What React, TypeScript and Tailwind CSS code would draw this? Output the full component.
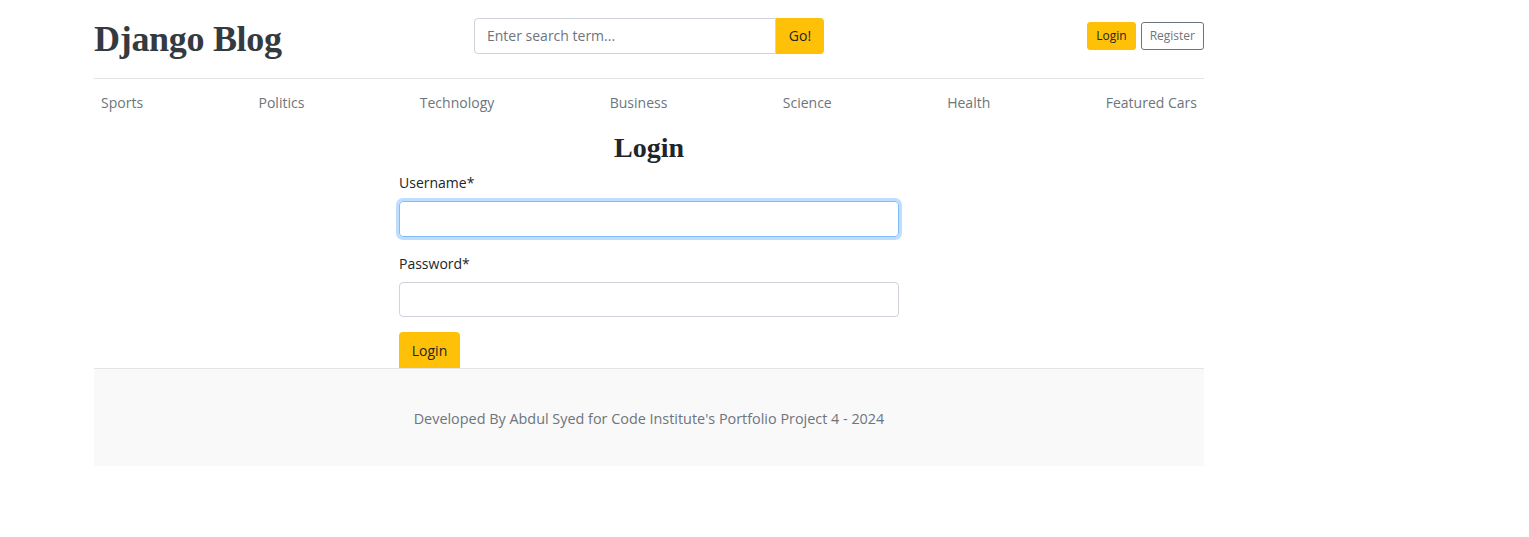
export default function App() {
  const cats = ["Sports", "Politics", "Technology", "Business", "Science", "Health", "Featured Cars"];
  return (
    <div className="min-h-[537px] bg-white" style={{ fontFamily: '"Open Sans", "Noto Sans", sans-serif' }}>
      <div className="ml-[94px] w-[1110px]">
        <header className="flex items-center h-[79px] border-b border-[#e5e5e5]">
          <div className="w-[380px]">
            <span className="text-[36px] font-bold text-[#343a40] leading-none tracking-[-0.3px]" style={{ fontFamily: '"Liberation Serif", "DejaVu Serif", serif' }}>
              Django Blog
            </span>
          </div>
          <div className="flex items-center h-[36px] mb-[7px]">
            <input
              placeholder="Enter search term..."
              className="w-[302px] h-[36px] border border-[#ced4da] rounded-l-[4px] px-3 text-[14px] text-[#495057] placeholder:text-[#6c757d] outline-none"
            />
            <button className="h-[36px] w-[48px] bg-[#ffc107] rounded-r-[4px] text-[14px] text-[#212529]">Go!</button>
          </div>
          <div className="ml-auto flex items-center gap-[5px] mb-[7px]">
            <button className="h-[28px] px-[8px] bg-[#ffc107] rounded-[3px] text-[12px] text-[#212529] border border-[#ffc107]">Login</button>
            <button className="h-[28px] px-[8px] bg-white rounded-[3px] text-[12px] text-[#6c757d] border border-[#6c757d]">Register</button>
          </div>
        </header>
        <nav className="flex justify-between h-[46px] items-center px-[7px]">
          {cats.map((c) => (
            <a key={c} className="text-[14px] text-[#6c757d]">{c}</a>
          ))}
        </nav>
        <main className="w-[500px] mx-auto">
          <h2 className="text-center text-[28px] font-bold text-[#212529] leading-[36px] mt-[5px]" style={{ fontFamily: '"Liberation Serif", "DejaVu Serif", serif' }}>
            Login
          </h2>
          <div className="mt-[6px]">
            <label className="block text-[14px] text-[#212529] leading-[21px]">Username*</label>
            <div className="mt-[8px] h-[36px] rounded-[4px] border border-[#80bdff] shadow-[0_0_0_3px_rgba(0,123,255,0.25)]" />
          </div>
          <div className="mt-[16px]">
            <label className="block text-[14px] text-[#212529] leading-[21px]">Password*</label>
            <div className="mt-[8px] h-[35px] rounded-[4px] border border-[#ced4da]" />
          </div>
          <button className="mt-[15px] h-[36px] w-[61px] bg-[#ffc107] rounded-t-[4px] text-[14px] text-[#212529] block">Login</button>
        </main>
        <footer className="h-[98px] bg-[#f9f9f9] border-t border-[#e5e5e5] flex items-center justify-center">
          <p className="text-[14.4px] text-[#6c757d] mt-[2px]">Developed By Abdul Syed for Code Institute's Portfolio Project 4 - 2024</p>
        </footer>
      </div>
    </div>
  );
}
